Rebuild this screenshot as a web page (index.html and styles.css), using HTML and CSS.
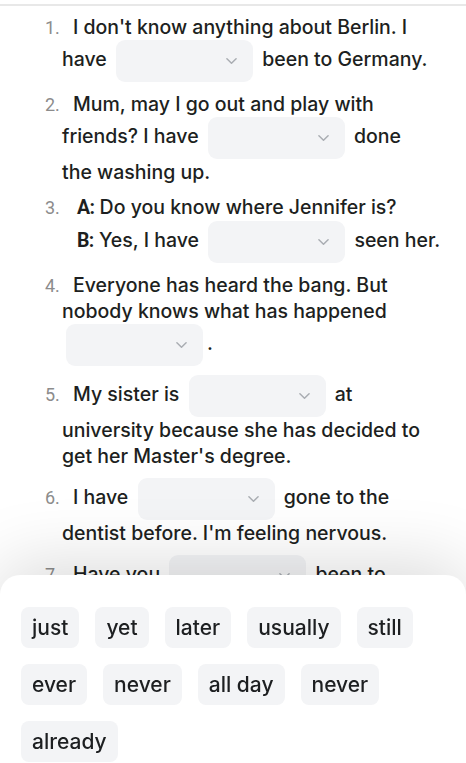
FILE: index.html
```html
<!DOCTYPE html>
<html>
  <head>
    <title>Present perfect</title>
    <link rel="stylesheet" href="styles.css">
  </head>
  <body>
    <div class="topline"></div>
    <div class="exercise">
      <div class="item">
        <span class="num">1.</span>I don't know anything about Berlin. I have
        <span class="gap"><svg viewBox="0 0 12 8"><path d="M1 1.5l5 5 5-5" /></svg></span>
        been to Germany.
      </div>
      <div class="item">
        <span class="num">2.</span>Mum, may I go out and play with friends? I have
        <span class="gap"><svg viewBox="0 0 12 8"><path d="M1 1.5l5 5 5-5" /></svg></span>
        done the washing up.
      </div>
      <div class="item dialog">
        <span class="num">3.</span><b>A:</b> Do you know where Jennifer is?<br />
        <b>B:</b> Yes, I have
        <span class="gap"><svg viewBox="0 0 12 8"><path d="M1 1.5l5 5 5-5" /></svg></span>
        seen her.
      </div>
      <div class="item">
        <span class="num">4.</span>Everyone has heard the bang. But nobody knows what has happened
        <span class="gap"><svg viewBox="0 0 12 8"><path d="M1 1.5l5 5 5-5" /></svg></span>.
      </div>
      <div class="item">
        <span class="num">5.</span>My sister is
        <span class="gap"><svg viewBox="0 0 12 8"><path d="M1 1.5l5 5 5-5" /></svg></span>
        at university because she has decided to get her Master's degree.
      </div>
      <div class="item">
        <span class="num">6.</span>I have
        <span class="gap"><svg viewBox="0 0 12 8"><path d="M1 1.5l5 5 5-5" /></svg></span>
        gone to the dentist before. I'm feeling nervous.
      </div>
      <div class="item">
        <span class="num">7.</span>Have you
        <span class="gap"><svg viewBox="0 0 12 8"><path d="M1 1.5l5 5 5-5" /></svg></span>
        been to Paris? It's a beautiful city.
      </div>
    </div>

    <div class="sheet">
      <div class="chips">
        <span class="chip">just</span>
        <span class="chip">yet</span>
        <span class="chip">later</span>
        <span class="chip">usually</span>
        <span class="chip">still</span>
        <span class="chip">ever</span>
        <span class="chip">never</span>
        <span class="chip">all day</span>
        <span class="chip">never</span>
        <span class="chip">already</span>
      </div>
    </div>
  </body>
</html>
```

FILE: styles.css
```css
body {
  margin: 0;
  font: 500 19.5px "Inter", sans-serif;
  color: #1d1f21;
  background: #fff;
}
.topline {
  height: 2px;
  margin-top: 4px;
  background: #e8e8e8;
}
.exercise {
  padding-top: 8px;
}
.item {
  padding: 0 30px 0 62px;
  margin-bottom: 9px;
  line-height: 26px;
}
.dialog {
  padding: 0 10px 0 77px;
}
.num {
  display: inline-block;
  width: 28px;
  margin-left: -17px;
  font: 400 18px "Roboto", sans-serif;
  color: #8c8c8c;
}
.dialog .num {
  width: 32px;
  margin-left: -32px;
}
b {
  font-family: "Roboto", sans-serif;
  font-weight: 700;
  letter-spacing: -0.6px;
}
.gap {
  display: inline-flex;
  align-items: center;
  justify-content: flex-end;
  box-sizing: border-box;
  width: 137px;
  height: 42px;
  margin: 0 4px;
  padding-right: 16px;
  vertical-align: middle;
  background: #f3f4f6;
  border-radius: 9px;
}
.gap svg {
  width: 11px;
  height: 8px;
  fill: none;
  stroke: #a9adb2;
  stroke-width: 1.6;
  stroke-linecap: round;
  stroke-linejoin: round;
}
.sheet {
  position: fixed;
  top: 575px;
  left: 0;
  right: 0;
  bottom: 0;
  overflow: hidden;
  background: #fff;
  border-radius: 20px 20px 0 0;
  box-shadow: 0 -10px 70px rgba(0, 0, 0, 0.15);
}
.chips {
  display: flex;
  flex-wrap: wrap;
  gap: 16px;
  padding: 32px 21px;
}
.chip {
  height: 41px;
  line-height: 41px;
  padding: 0 11px;
  font-size: 21px;
  background: #f3f4f6;
  border-radius: 8px;
}
```
